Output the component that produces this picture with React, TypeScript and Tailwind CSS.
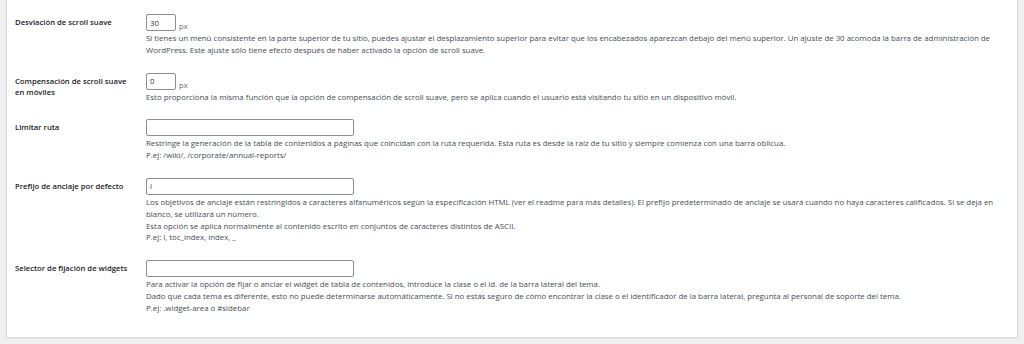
import React from 'react';

interface SettingRow {
  label: string[];
  value: string;
  size: 'small' | 'wide';
  unit?: string;
  lines: string[];
}

const rows: SettingRow[] = [
  {
    label: ['Desviación de scroll suave'],
    value: '30',
    size: 'small',
    unit: 'px',
    lines: [
      'Si tienes un menú consistente en la parte superior de tu sitio, puedes ajustar el desplazamiento superior para evitar que los encabezados aparezcan debajo del menú superior. Un ajuste de 30 acomoda la barra de administración de WordPress. Este ajuste sólo tiene efecto después de haber activado la opción de scroll suave.',
    ],
  },
  {
    label: ['Compensación de scroll suave', 'en móviles'],
    value: '0',
    size: 'small',
    unit: 'px',
    lines: [
      'Esto proporciona la misma función que la opción de compensación de scroll suave, pero se aplica cuando el usuario está visitando tu sitio en un dispositivo móvil.',
    ],
  },
  {
    label: ['Limitar ruta'],
    value: '',
    size: 'wide',
    lines: [
      'Restringe la generación de la tabla de contenidos a páginas que coincidan con la ruta requerida. Esta ruta es desde la raíz de tu sitio y siempre comienza con una barra oblicua.',
      'P.ej: /wiki/, /corporate/annual-reports/',
    ],
  },
  {
    label: ['Prefijo de anclaje por defecto'],
    value: 'i',
    size: 'wide',
    lines: [
      'Los objetivos de anclaje están restringidos a caracteres alfanuméricos según la especificación HTML (ver el readme para más detalles). El prefijo predeterminado de anclaje se usará cuando no haya caracteres calificados. Si se deja en blanco, se utilizará un número.',
      'Esta opción se aplica normalmente al contenido escrito en conjuntos de caracteres distintos de ASCII.',
      'P.ej: i, toc_index, index, _',
    ],
  },
  {
    label: ['Selector de fijación de widgets'],
    value: '',
    size: 'wide',
    lines: [
      'Para activar la opción de fijar o anclar el widget de tabla de contenidos, introduce la clase o el id. de la barra lateral del tema.',
      'Dado que cada tema es diferente, esto no puede determinarse automáticamente. Si no estás seguro de cómo encontrar la clase o el identificador de la barra lateral, pregunta al personal de soporte del tema.',
      'P.ej: .widget-area o #sidebar',
    ],
  },
];

export default function App() {
  return (
    <div
      className="h-[344px] w-[1024px] overflow-hidden bg-[#f0f0f1] px-[6px]"
      style={{ fontFamily: '"Open Sans", "Noto Sans", sans-serif' }}
    >
      <div className="border border-t-0 border-[#dcdcde] bg-white pl-[8px] pr-[8px] pt-[6px] pb-[14px] shadow-[0_1px_1px_rgba(0,0,0,0.04)]">
        {rows.map((row) => (
          <div key={row.label.join(' ')} className="flex py-[8px]">
            <div className="w-[131px] shrink-0 pt-[3px] text-[7.7px] font-semibold leading-[11.5px] text-[#1d2327]">
              {row.label.map((part) => (
                <div key={part}>{part}</div>
              ))}
            </div>
            <div className="w-[866px]">
              <div className="flex items-end gap-[3px]">
                <input
                  readOnly
                  value={row.value}
                  className={`h-[17px] rounded-[2px] border border-[#8c8f94] bg-white px-[3px] text-[7.8px] text-[#2c3338] outline-none ${
                    row.size === 'small' ? 'w-[30px]' : 'w-[208px]'
                  }`}
                />
                {row.unit && <span className="text-[7.6px] leading-[9px] text-[#646970]">{row.unit}</span>}
              </div>
              <div className="mt-[2px] text-[7.85px] leading-[11.8px] text-[#474e55]">
                {row.lines.map((line) => (
                  <p key={line}>{line}</p>
                ))}
              </div>
            </div>
          </div>
        ))}
      </div>
    </div>
  );
}
